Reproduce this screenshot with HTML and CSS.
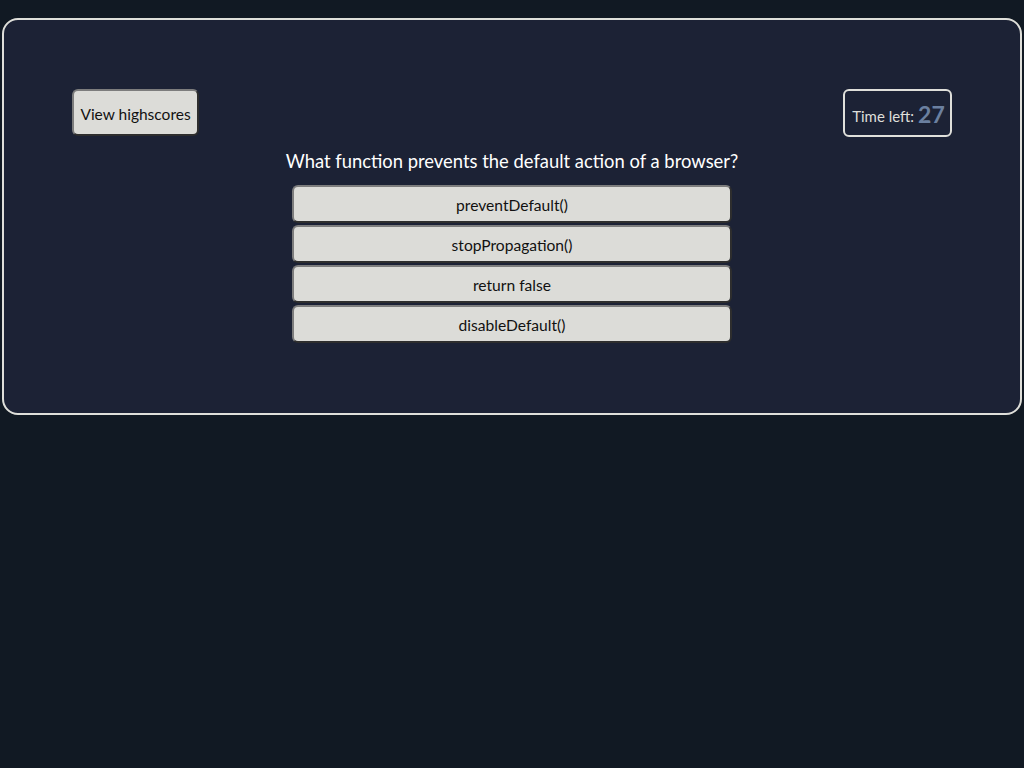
FILE: index.html
```html
<!DOCTYPE html>
<html>
<head>
<meta charset="utf-8">
<link rel="stylesheet" href="styles.css">
</head>
<body>
<main class="card">
  <header class="top">
    <button class="hs">View highscores</button>
    <div class="timer">Time left: <span class="num">27</span></div>
  </header>
  <section class="quiz">
    <h2 class="question">What function prevents the default action of a browser?</h2>
    <div class="answers">
      <button class="ans">preventDefault()</button>
      <button class="ans">stopPropagation()</button>
      <button class="ans">return false</button>
      <button class="ans">disableDefault()</button>
    </div>
  </section>
</main>
</body>
</html>
```

FILE: styles.css
```css
html, body {
  margin: 0;
  padding: 0;
  background: #111923;
  font-family: "Source Sans Pro", Lato, "Noto Sans", sans-serif;
}
.card {
  margin: 18px 2px 0 2px;
  border: 2px solid #dfdfda;
  border-radius: 16px;
  background: #1c2235;
  padding: 69px 68px 70px 68px;
  height: 397px;
  box-sizing: border-box;
}
.top {
  display: flex;
  justify-content: space-between;
  align-items: flex-start;
}
.hs {
  font-family: inherit;
  font-size: 15.5px;
  color: #111;
  background: #dcdcd8;
  border: 2px solid;
  border-color: #7d7d7d #2e2e2e #2e2e2e #7d7d7d;
  border-radius: 6px;
  width: 127px;
  height: 47px;
  padding: 2px 0 0 0;
}
.timer {
  box-sizing: border-box;
  width: 109px;
  height: 48px;
  border: 2px solid #dfdfda;
  border-radius: 6px;
  color: #dfdfda;
  font-size: 15px;
  display: flex;
  align-items: center;
  justify-content: center;
  gap: 4px;
  padding: 6px 0 0 2px;
}
.num {
  color: #6b80a0;
  font-size: 23px;
  font-weight: bold;
  position: relative;
  top: -2px;
}
.quiz {
  display: flex;
  flex-direction: column;
  align-items: center;
}
.question {
  margin: 11px 0 10px 0;
  font-size: 18.4px;
  font-weight: normal;
  color: #ffffff;
  line-height: 27px;
}
.answers {
  display: flex;
  flex-direction: column;
  gap: 2px;
}
.ans {
  font-family: inherit;
  font-size: 15.6px;
  color: #111;
  background: #dcdcd8;
  border: 2px solid;
  border-color: #7d7d7d #2e2e2e #2e2e2e #7d7d7d;
  border-radius: 6px;
  width: 440px;
  height: 38px;
  padding: 2px 0 0 0;
}
```
